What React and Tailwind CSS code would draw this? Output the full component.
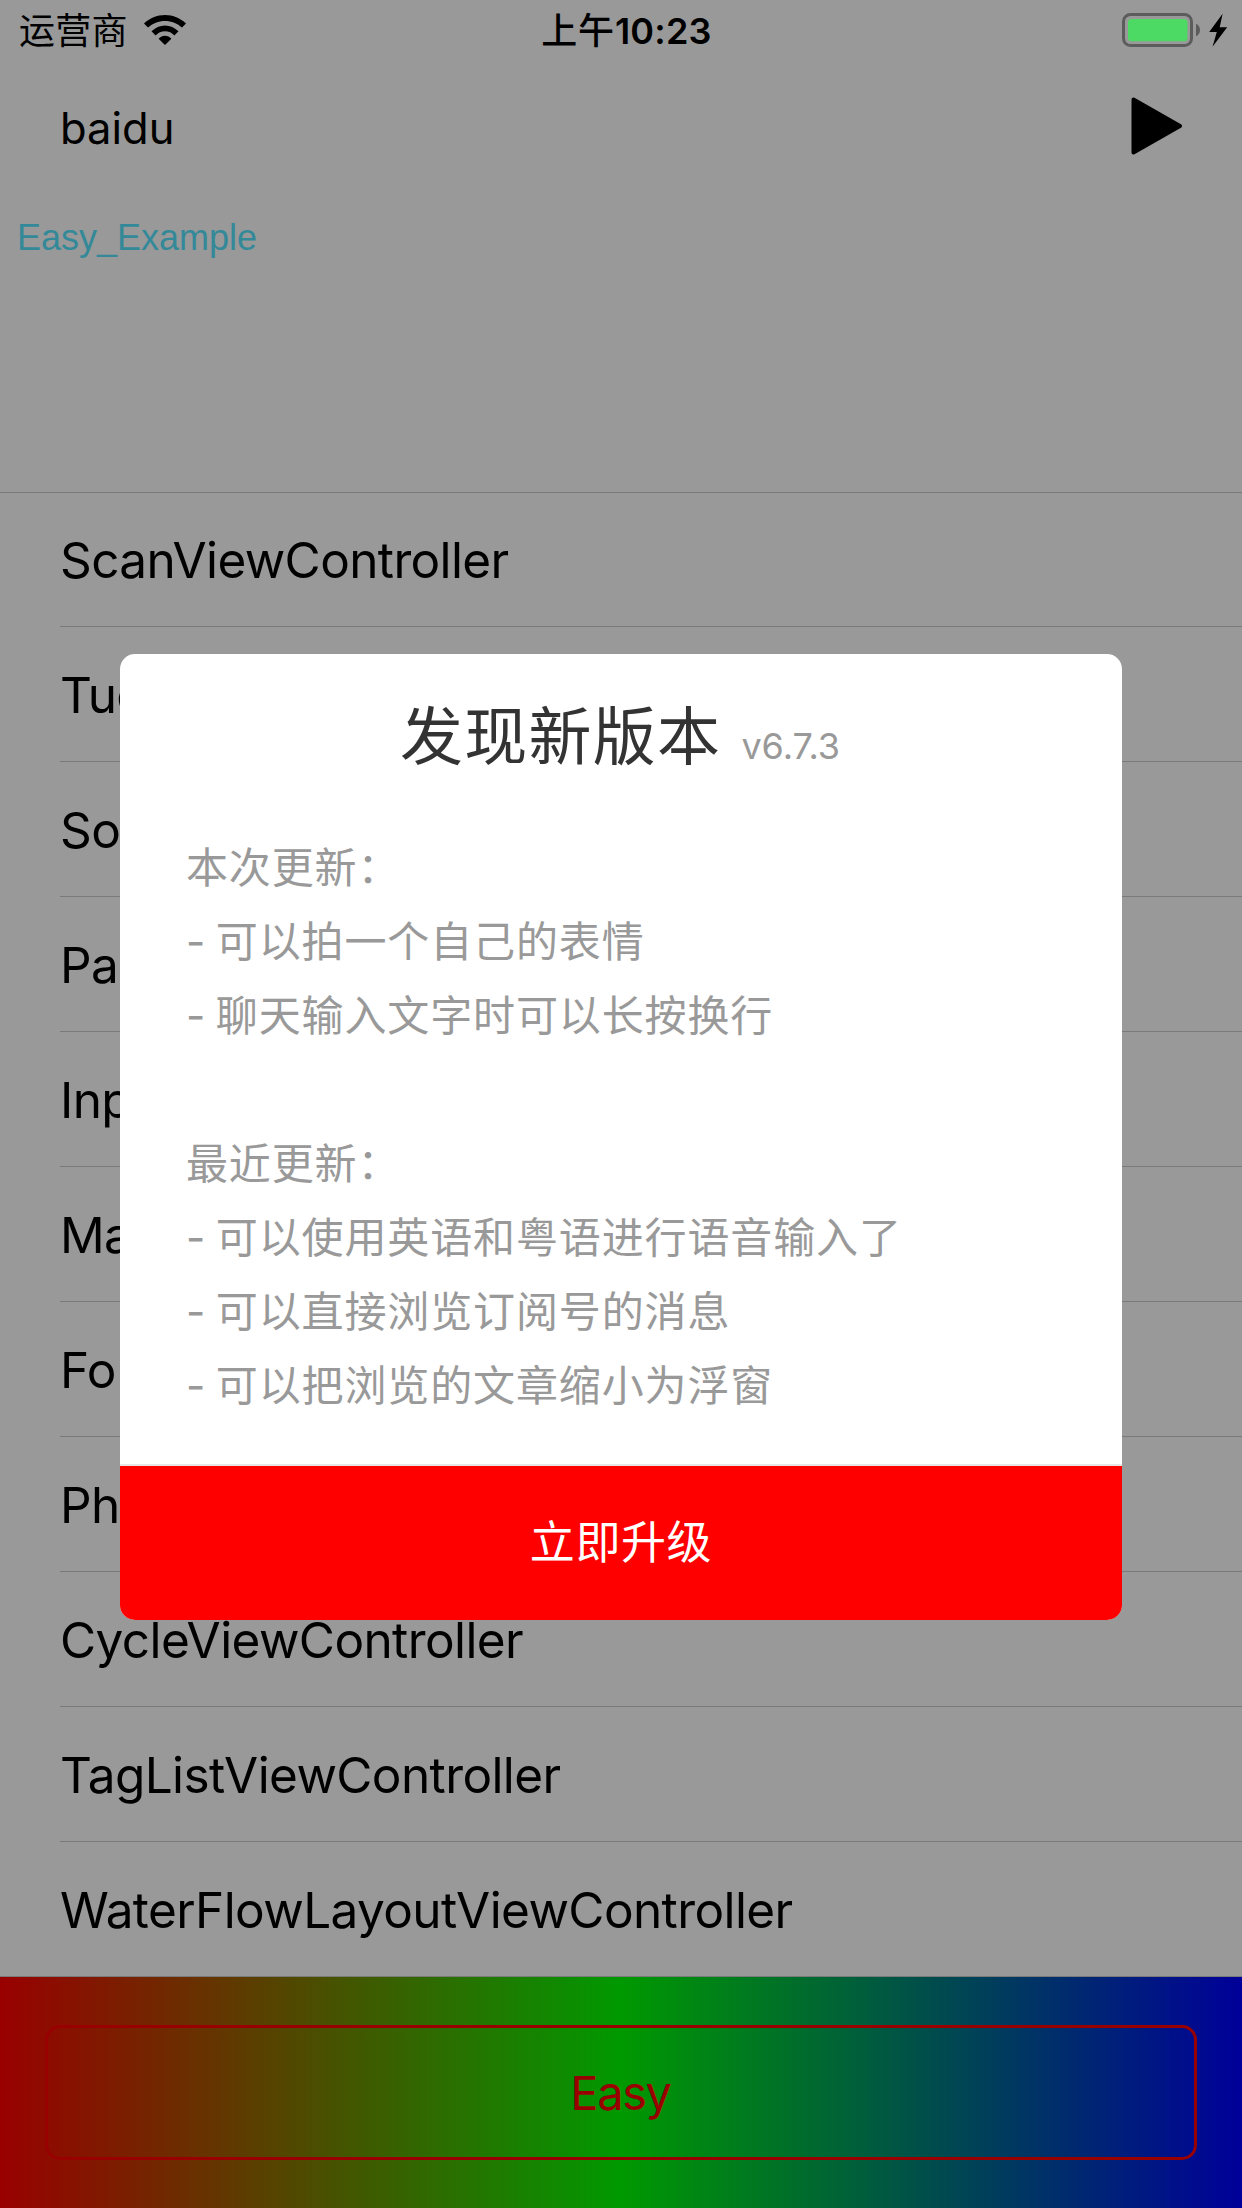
const controllers = [
  "ScanViewController",
  "TucaoViewController",
  "Sort",
  "PageViewController",
  "InputViewController",
  "MapViewController",
  "Fo",
  "PhotoViewController",
  "CycleViewController",
  "TagListViewController",
  "WaterFlowLayoutViewController",
];

const notes = [
  "本次更新：",
  "- 可以拍一个自己的表情",
  "- 聊天输入文字时可以长按换行",
  "",
  "最近更新：",
  "- 可以使用英语和粤语进行语音输入了",
  "- 可以直接浏览订阅号的消息",
  "- 可以把浏览的文章缩小为浮窗",
];

function WifiIcon() {
  return (
    <svg width="42" height="30" viewBox="0 0 42 30" className="block">
      <path d="M0 8.6C5.6 3 13 0 21 0s15.400 3 21 8.600l-4 4C33.500 8.300 27.500 5.900 21 5.900S8.500 8.300 4 12.600z" />
      <path d="M7.500 16.300C11.200 12.500 16 10.400 21 10.400s9.800 2.100 13.500 5.900l-4.100 4.100C28 17.700 24.600 16.200 21 16.200s-7 1.500-9.400 4.200z" />
      <path d="M14.600 23.700C16.300 21.800 18.600 20.800 21 20.800s4.700 1 6.400 2.900L21 30z" />
    </svg>
  );
}

function BatteryIcon() {
  return (
    <svg width="106" height="34" viewBox="0 0 106 34" className="block">
      <rect x="1.500" y="1.500" width="68" height="31" rx="7" fill="none" stroke="#5c5c5c" strokeWidth="3" />
      <rect x="6" y="6" width="59.500" height="22.300" rx="3.500" fill="#4cd964" />
      <path d="M74 10.800c2.600 1 4 3.300 4 6.200s-1.400 5.200-4 6.200z" fill="#5c5c5c" />
      <path d="M100.600 0.800L87.200 19h7.600L90.500 33.800 105.200 14.200h-7.500z" />
    </svg>
  );
}

function StatusBar() {
  return (
    <header className="grid h-[60px] grid-cols-3 items-center">
      <div className="flex items-center pl-[19px]">
        <span className="w-[125px] pt-[2px] text-[36px] leading-[58px] tracking-[0.3px]">运营商</span>
        <WifiIcon />
      </div>
      <div className="flex items-center justify-center pl-[11px] pt-[2px] text-[36px] leading-[58px]">
        <span className="font-medium tracking-[0.8px]">上午</span>
        <span className="font-semibold tracking-[0.2px]">10:23</span>
      </div>
      <div className="flex items-center justify-end pr-[14px]">
        <BatteryIcon />
      </div>
    </header>
  );
}

function UpdateDialog() {
  return (
    <div className="absolute inset-0 flex justify-center pt-[654px]">
      <section className="flex h-[966px] w-[1002px] flex-col overflow-hidden rounded-[15px] bg-white">
        <h1 className="flex h-[168px] items-baseline justify-center pr-[2px] pt-[36px] leading-[92px] text-[#333]">
          <span className="text-[63px] tracking-[1.3px]">发现新版本</span>
          <span className="ml-[20px] text-[36px] text-[#999]">v6.7.3</span>
        </h1>
        <div className="flex-1 pl-[66px] pt-[9px] text-[42px] text-[#999]">
          {notes.map((note, i) => (
            <p key={i} className="h-[74px] leading-[74px] tracking-[0.87px] [word-spacing:-3px]">
              {note}
            </p>
          ))}
        </div>
        <button className="h-[156px] border-t-2 border-[#e6e6e6] bg-[red] text-[45px] leading-[154px] tracking-[0.6px] text-white">
          立即升级
        </button>
      </section>
    </div>
  );
}

export default function App() {
  return (
    <div className="relative h-[2208px] w-[1242px] overflow-hidden bg-[#999] font-[Inter,'Noto_Sans_CJK_SC',sans-serif] text-black">
      <StatusBar />
      <div className="flex h-[132px] items-center justify-between pl-[60px] pr-[59px]">
        <span className="pt-[4px] text-[43.5px] leading-[60px]">baidu</span>
        <svg width="52" height="58" viewBox="0 0 52 58" className="block">
          <path d="M2.500 2.500L49 29 2.500 55.500z" stroke="#000" strokeWidth="4" strokeLinejoin="round" />
        </svg>
      </div>
      <div className="h-[300px] pl-[17px] pt-[25px] font-['Liberation_Sans',sans-serif] text-[36px] leading-[42px] text-[#348999]">
        Easy_Example
      </div>
      <ul className="h-[1485px] border-t border-[#7a7a7a]">
        {controllers.map((name, i) => (
          <li
            key={name}
            className={
              i === 0
                ? "ml-[60px] h-[134px] border-b border-[#7a7a7a] text-[49.5px] leading-[135px] tracking-[-0.63px]"
                : i === controllers.length - 1
                  ? "h-[135px] border-b border-[#7a7a7a] pl-[60px] text-[49.5px] leading-[136px] tracking-[-0.6px]"
                  : "ml-[60px] h-[135px] border-b border-[#7a7a7a] text-[49.5px] leading-[136px] tracking-[-0.6px]"
            }
          >
            {name}
          </li>
        ))}
      </ul>
      <footer className="h-[231px] bg-[linear-gradient(to_right,#990000,#009900,#000099)] px-[45px] pt-[48px]">
        <button className="h-[135px] w-full rounded-[15px] border-[3px] border-[#990000] pt-[2px] pr-px text-[47px] tracking-[-1.4px] text-[#990000]">
          Easy
        </button>
      </footer>
      <UpdateDialog />
    </div>
  );
}
